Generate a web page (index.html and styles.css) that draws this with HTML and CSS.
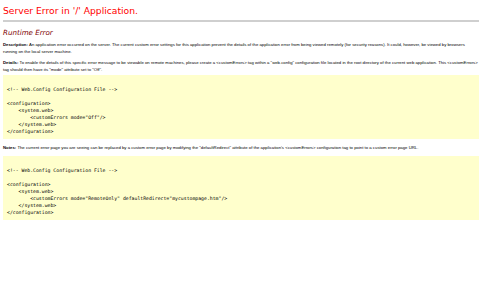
FILE: index.html
```html
<!DOCTYPE html>
<html lang="en">
<head>
<meta charset="utf-8">
<title>Runtime Error</title>
<link rel="stylesheet" href="styles.css">
</head>
<body class="page">
<h1 class="title">Server Error in '/' Application.</h1>
<div class="rule"></div>
<h2 class="subtitle"><i>Runtime Error</i></h2>
<p class="para desc"><b class="label">Description: </b>An application error occurred on the server. The current custom error settings for this application prevent the details of the application error from being viewed remotely (for security reasons). It could, however, be viewed by browsers running on the local server machine.</p>
<p class="para details"><b class="label">Details:</b> To enable the details of this specific error message to be viewable on remote machines, please create a &lt;customErrors&gt; tag within a "web.config" configuration file located in the root directory of the current web application. This &lt;customErrors&gt; tag should then have its "mode" attribute set to "Off".</p>
<div class="codebox first"><pre class="code">

&lt;!-- Web.Config Configuration File --&gt;

&lt;configuration&gt;
    &lt;system.web&gt;
        &lt;customErrors mode="Off"/&gt;
    &lt;/system.web&gt;
&lt;/configuration&gt;</pre></div>
<p class="para notes"><b class="label">Notes:</b> The current error page you are seeing can be replaced by a custom error page by modifying the "defaultRedirect" attribute of the application's &lt;customErrors&gt; configuration tag to point to a custom error page URL.</p>
<div class="codebox second"><pre class="code">

&lt;!-- Web.Config Configuration File --&gt;

&lt;configuration&gt;
    &lt;system.web&gt;
        &lt;customErrors mode="RemoteOnly" defaultRedirect="mycustompage.htm"/&gt;
    &lt;/system.web&gt;
&lt;/configuration&gt;</pre></div>
</body>
</html>
```
FILE: styles.css
```css
html, body {
  background: #ffffff;
}
.page {
  margin: 0;
  padding: 0 1px 0 3px;
  color: #000;
}
.title {
  margin: 5px 0 0;
  font-family: "DejaVu Sans", Verdana, sans-serif;
  font-weight: normal;
  font-size: 9.2px;
  line-height: 11px;
  color: #ff0000;
}
.rule {
  margin-top: 4px;
  height: 2px;
  background: #cfcfcf;
}
.subtitle {
  margin: 7px 0 0;
  font-family: "DejaVu Sans", Verdana, sans-serif;
  font-weight: normal;
  font-size: 7.1px;
  line-height: 8px;
  color: #800000;
}
.para {
  margin: 4px 0 0;
  font-family: "Liberation Sans", Arial, sans-serif;
  font-size: 4.28px;
  line-height: 7px;
  color: #000;
}
.label {
  font-weight: bold;
}
.codebox {
  background: #ffffcc;
  padding: 4px;
}
.first {
  margin-top: 1.5px;
}
.second {
  margin-top: 4.5px;
}
.notes {
  margin-top: 5.5px;
}
.code {
  margin: 0;
  font-family: "DejaVu Sans Mono", "Liberation Mono", monospace;
  font-size: 4.82px;
  line-height: 7px;
  color: #000;
}
```
